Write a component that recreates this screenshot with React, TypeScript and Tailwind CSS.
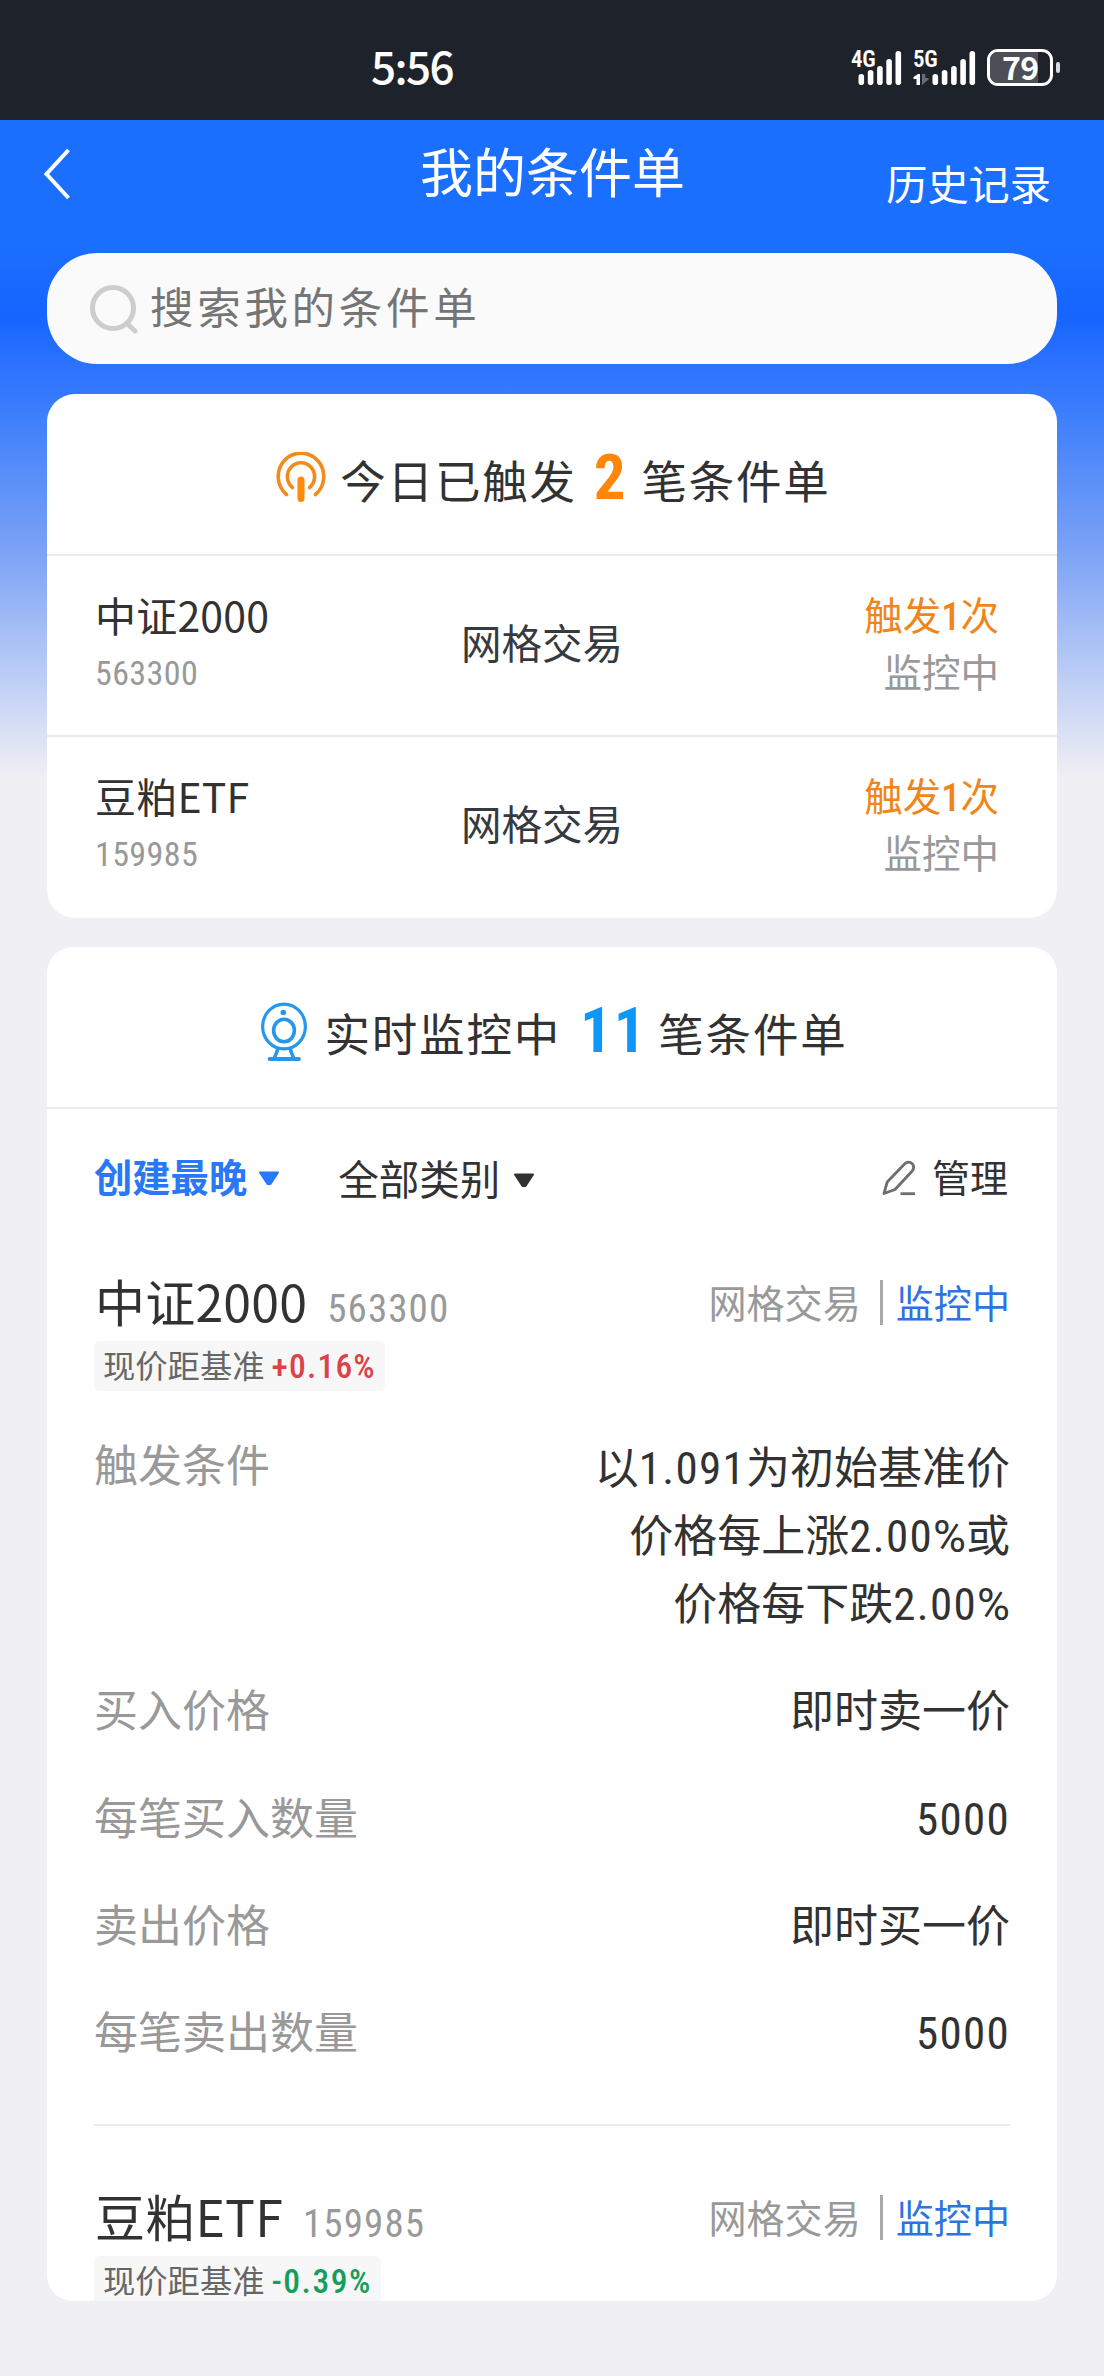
import type { ReactNode } from "react";

interface TriggeredOrder {
  name: string;
  code: string;
  type: string;
  times: number;
}

interface MonitorOrder {
  name: string;
  code: string;
  change: string;
  up: boolean;
  conditions: string[];
  details: { label: string; value: string }[];
}

const triggeredOrders: TriggeredOrder[] = [
  { name: "中证2000", code: "563300", type: "网格交易", times: 1 },
  { name: "豆粕ETF", code: "159985", type: "网格交易", times: 1 },
];

const monitorOrders: MonitorOrder[] = [
  {
    name: "中证2000",
    code: "563300",
    change: "+0.16%",
    up: true,
    conditions: ["以1.091为初始基准价", "价格每上涨2.00%或", "价格每下跌2.00%"],
    details: [
      { label: "买入价格", value: "即时卖一价" },
      { label: "每笔买入数量", value: "5000" },
      { label: "卖出价格", value: "即时买一价" },
      { label: "每笔卖出数量", value: "5000" },
    ],
  },
  {
    name: "豆粕ETF",
    code: "159985",
    change: "-0.39%",
    up: false,
    conditions: [],
    details: [],
  },
];

function SignalBars() {
  return (
    <svg width="44" height="34" viewBox="0 0 44 34" fill="#fff">
      <rect x="0.5" y="23" width="5.6" height="11" rx="2.8" />
      <rect x="9.8" y="19" width="5.6" height="15" rx="2.8" />
      <rect x="19.1" y="15" width="5.6" height="19" rx="2.8" />
      <rect x="28.3" y="8" width="5.6" height="26" rx="2.8" />
      <rect x="37.5" y="0" width="5.6" height="34" rx="2.8" />
    </svg>
  );
}

function StatusBar() {
  return (
    <div className="flex h-[120px] items-start bg-[#1e222b] text-white">
      <div className="ml-[371px] mt-[35px] w-[480px] font-['Noto_Sans_CJK_SC'] text-[44px] font-medium leading-[60px] tracking-[-1.6px]">
        5:56
      </div>
      {/* 4G */}
      <div className="relative mt-[51px] w-[62px] pl-[7px]">
        <SignalBars />
        <span className="absolute left-0 top-[-2px] font-['Roboto'] text-[23px] font-semibold leading-[22px] tracking-[-0.4px] font-stretch-75%">
          4G
        </span>
      </div>
      {/* 5G */}
      <div className="relative mt-[51px] w-[74px] pl-[19px]">
        <SignalBars />
        <span className="absolute left-0 top-[-2px] font-['Roboto'] text-[23px] font-semibold leading-[22px] tracking-[-0.4px] font-stretch-75%">
          5G
        </span>
        <svg className="absolute left-0 top-[22px]" width="16" height="12" viewBox="0 0 16 12">
          <path d="M7 1V12H3.5V6H0.5V4L5 1Z" fill="#fff" />
          <path d="M9 1V12L15.5 6.5V5H12.3V1Z" fill="#6b6e75" />
        </svg>
      </div>
      {/* 电池 */}
      <div className="mt-[49px] flex items-center gap-[3px]">
        <div className="relative h-[37px] w-[66px] rounded-[11px] border-[3px] border-white">
          <div className="h-full w-[48px] rounded-l-[8px] bg-[#4c4f57]" />
          <span className="absolute left-[12px] top-[-9px] font-['Noto_Sans_CJK_SC'] text-[32px] font-bold leading-[46px] tracking-[-0.6px]">
            79
          </span>
        </div>
        <div className="h-[11px] w-[4px] rounded-[2px] bg-[#d8d9db]" />
      </div>
    </div>
  );
}

function NavBar() {
  return (
    <div className="flex h-[133px] items-start pl-[43px] pr-[53px] text-white">
      <button className="mt-[28px] w-[377px] shrink-0" aria-label="返回">
        <svg width="28" height="52" viewBox="0 0 28 52" fill="none" stroke="#fff" strokeWidth="4">
          <path d="M25.5 2L3.5 26L25.5 50" />
        </svg>
      </button>
      <h1 className="mt-[20px] text-[53px] leading-[60px]">我的条件单</h1>
      <a className="ml-auto mt-[38px] text-[41.2px] leading-[48px]">历史记录</a>
    </div>
  );
}

function SearchBox() {
  return (
    <div className="mx-[47px] flex h-[111px] items-center rounded-[50px] bg-[#fafafb] pl-[42px]">
      <svg width="50" height="50" viewBox="0 0 50 50" fill="none" stroke="#cdcdcd" strokeLinecap="round">
        <circle cx="24" cy="24" r="20.5" strokeWidth="5" />
        <path d="M38.5 40L46 47" strokeWidth="5" />
      </svg>
      <span className="ml-[11px] mt-[-6px] text-[43.5px] tracking-[3.7px] leading-[60px] text-[#757575]">
        搜索我的条件单
      </span>
    </div>
  );
}

function TriggerIcon() {
  return (
    <svg className="mt-[58px]" width="50" height="50" viewBox="0 0 50 50" fill="none" stroke="#f38b1c" strokeLinecap="round">
      <path d="M10.5 42.5A22.8 23.3 0 1 1 39.5 42.5" strokeWidth="3.6" />
      <path d="M16.5 35.5A13.6 13.9 0 1 1 33.5 35.5" strokeWidth="3.6" />
      <path d="M25 28V46.5" stroke="#ff8a0c" strokeWidth="7" />
    </svg>
  );
}

function CameraIcon() {
  return (
    <svg className="mt-[55px]" width="48" height="60" viewBox="0 0 48 60" fill="none" stroke="#2597ee">
      <ellipse cx="24" cy="24.5" rx="21.4" ry="22.3" strokeWidth="3.2" />
      <ellipse cx="24" cy="28.5" rx="10.4" ry="11.2" strokeWidth="3.6" />
      <circle cx="23.3" cy="10.5" r="2.8" fill="#2597ee" stroke="none" />
      <path d="M18 46.5L14.5 56M30 46.5L33.5 56" strokeWidth="3.6" />
      <path d="M9.5 57H39" strokeWidth="3.8" strokeLinecap="round" />
    </svg>
  );
}

function PencilIcon() {
  return (
    <svg className="mt-[4px]" width="34" height="36" viewBox="0 0 34 36" fill="none" stroke="#6e6e6e" strokeWidth="2.8" strokeLinejoin="round">
      <path d="M2 33.5L5.2 22L22.5 4C25 1.6 28 1.6 30 3.6C32 5.6 32 8.6 30 11.2L13 29.5Z" />
      <path d="M18.5 33.7H33" />
    </svg>
  );
}

function Caret({ color }: { color: string }) {
  return (
    <svg className="mt-[4px]" width="22" height="15" viewBox="0 0 22 15" fill={color} stroke={color} strokeWidth="2" strokeLinejoin="round">
      <path d="M2 1.5H20L12.5 13H9.5Z" />
    </svg>
  );
}

// 数字用窄体，汉字保持默认字体
function Mixed({ text }: { text: string }) {
  return (
    <>
      {text.split(/([\d.]+|%)/).map((part, i) => {
        if (part === "%") {
          return (
            <span key={i} className="font-['Roboto'] text-[45px] leading-none">
              %
            </span>
          );
        }
        return /\d/.test(part) ? (
          <span key={i} className="font-['Roboto'] text-[45px] leading-none tracking-[1.3px] font-stretch-75%">
            {part}
          </span>
        ) : (
          part
        );
      })}
    </>
  );
}

function CardHeader({ children }: { children: ReactNode }) {
  return (
    <div className="flex h-[162px] items-start justify-center border-b-2 border-[#ebebeb] pl-[3px] text-[45.5px] leading-[60px] tracking-[1.8px] text-[#323232]">
      {children}
    </div>
  );
}

function TriggeredRow({ order }: { order: TriggeredOrder }) {
  return (
    <div className="flex h-[181px] items-start border-b-2 border-[#ebebeb] pl-[48px] pr-[58px] last:border-b-0">
      <div className="w-[366px] pt-[30px]">
        <div className="text-[41px] leading-[56px] tracking-[0.2px] text-[#323232]">{order.name}</div>
        <div className="mt-[3px] font-['Roboto'] text-[34px] leading-[56px] tracking-[0.4px] text-[#999] font-stretch-75%">
          {order.code}
        </div>
      </div>
      <div className="flex-1 pt-[58px] text-[40.5px] leading-[56px] text-[#343a40]">{order.type}</div>
      <div className="pt-[29px] text-right text-[38.5px]">
        <div className="leading-[56px] text-[#f08619]">
          触发
          <span className="font-['Roboto'] leading-none font-medium font-stretch-75%">{order.times}</span>次
        </div>
        <div className="leading-[58px] text-[#999]">监控中</div>
      </div>
    </div>
  );
}

function MonitorItem({ order }: { order: MonitorOrder }) {
  return (
    <div className="h-[915px] border-t-2 border-[#ebebeb] pt-[33px] first:border-transparent">
      <div className="flex h-[97px] items-start">
        <div className="ml-px mt-[20px] text-[50px] leading-[72px] tracking-[0.2px] text-[#323232]">{order.name}</div>
        <div className="ml-[20px] mt-[37px] font-['Roboto'] text-[39px] leading-[56px] tracking-[1.1px] text-[#999] font-stretch-75%">
          {order.code}
        </div>
        <div className="ml-auto mt-[30px] flex items-start text-[38.1px] leading-[56px]">
          <span className="text-[#999]">网格交易</span>
          <span className="ml-[19px] mr-[13px] mt-[6px] h-[45px] w-[3px] bg-[#aaa]" />
          <span className="text-[#2e73e2]">监控中</span>
        </div>
      </div>
      <div className="flex h-[50px] w-fit items-center rounded-[6px] bg-[#f7f7f7] px-[9px] text-[32.3px] text-[#666]">
        <span className="mt-[-4px] leading-[50px]">现价距基准</span>
        <span
          className={
            order.up
              ? "ml-[7px] mt-[2px] font-['Roboto'] text-[33.5px] font-medium tracking-[1.2px] text-[#db4249] font-stretch-75%"
              : "ml-[7px] mt-[2px] font-['Roboto'] text-[33.5px] font-medium tracking-[1.5px] text-[#129f5c] font-stretch-75%"
          }
        >
          {order.change}
        </span>
      </div>
      <div className="mt-[40px] flex flex-col gap-[39.3px] text-[44px] leading-[68px]">
        {order.conditions.length > 0 && (
          <div className="flex items-start justify-between">
            <span className="-mt-[2px] text-[#999]">触发条件</span>
            <div className="text-right text-[#323232]">
              {order.conditions.map((line) => (
                <div key={line}>
                  <Mixed text={line} />
                </div>
              ))}
            </div>
          </div>
        )}
        {order.details.map((item) => (
          <div key={item.label} className="flex justify-between">
            <span className="text-[#999]">{item.label}</span>
            <span className="text-[#323232]">
              <Mixed text={item.value} />
            </span>
          </div>
        ))}
      </div>
    </div>
  );
}

export default function App() {
  return (
    <div className="h-[2376px] w-[1104px] overflow-hidden bg-[#efeff4] font-['Noto_Sans_CJK_SC',sans-serif]">
      <StatusBar />
      <div className="h-[2256px] bg-[linear-gradient(180deg,#1b6fff_0px,#1b6fff_125px,#1665ff_195px,#2c72fe_245px,#367bfd_280px,#7ba2f6_430px,#efeff4_655px)]">
        <NavBar />
        <SearchBox />

        {/* 今日已触发 */}
        <section className="mx-[47px] mt-[30px] h-[524px] overflow-hidden rounded-[28px] bg-white">
          <CardHeader>
            <TriggerIcon />
            <span className="ml-[14px] mt-[55px]">今日已触发</span>
            <span className="ml-[17px] mr-[14px] mt-[54px] font-['Roboto'] text-[63px] font-bold text-[#ff860a] font-stretch-75%">
              2
            </span>
            <span className="mt-[55px]">笔条件单</span>
          </CardHeader>
          {triggeredOrders.map((order) => (
            <TriggeredRow key={order.code} order={order} />
          ))}
        </section>

        {/* 实时监控中 */}
        <section className="mx-[47px] mt-[29px] h-[1354px] overflow-hidden rounded-[26px] bg-white">
          <CardHeader>
            <CameraIcon />
            <span className="ml-[17px] mt-[55px]">实时监控中</span>
            <span className="ml-[19px] mr-[11px] mt-[54px] font-['Roboto'] text-[63px] font-bold text-[#0e96fb] font-stretch-75%">
              11
            </span>
            <span className="mt-[55px]">笔条件单</span>
          </CardHeader>

          <div className="flex h-[100px] items-end px-[47px] text-[#323232]">
            <div className="flex items-center gap-[11px] text-[38.3px] font-bold leading-[66px] text-[#2878f8]">
              创建最晚
              <Caret color="#2878ff" />
            </div>
            <div className="ml-[58px] flex items-center gap-[13px] text-[40.5px] leading-[62px]">
              全部类别
              <Caret color="#323232" />
            </div>
            <div className="ml-auto flex items-center gap-[16px] pr-[2px] text-[38px] leading-[66px]">
              <PencilIcon />
              管理
            </div>
          </div>

          <div className="px-[47px]">
            {monitorOrders.map((order) => (
              <MonitorItem key={order.code} order={order} />
            ))}
          </div>
        </section>
      </div>
    </div>
  );
}
